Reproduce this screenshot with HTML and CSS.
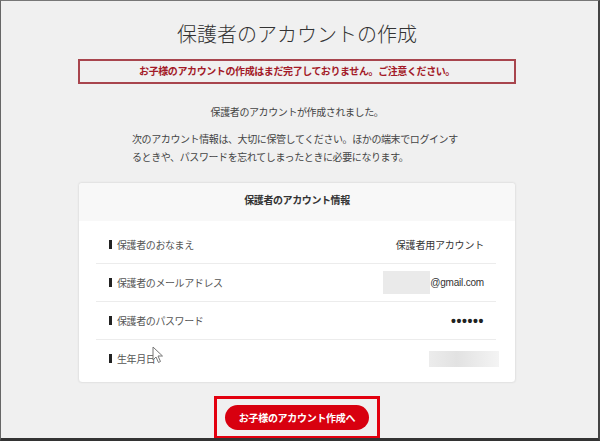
FILE: index.html
```html
<!DOCTYPE html>
<html lang="ja">
<head>
    <meta charset="UTF-8">
    <meta name="viewport" content="width=device-width, initial-scale=1.0">
    <title>保護者のアカウントの作成</title>
    <link rel="stylesheet" href="styles.css">
</head>
<body>
    <div class="frame">
        <div class="content">
            <h1 class="title">保護者のアカウントの作成</h1>
            <div class="warning">お子様のアカウントの作成はまだ完了しておりません。ご注意ください。</div>

            <p class="done">保護者のアカウントが作成されました。</p>
            <p class="note">次のアカウント情報は、大切に保管してください。ほかの端末でログインするときや、パスワードを忘れてしまったときに必要になります。</p>

            <div class="card">
                <div class="card-head">保護者のアカウント情報</div>
                <ul class="info">
                    <li class="row">
                        <span class="label">保護者のおなまえ</span>
                        <span class="value">保護者用アカウント</span>
                    </li>
                    <li class="row">
                        <span class="label">保護者のメールアドレス</span>
                        <span class="value"><span class="mask"></span>@gmail.com</span>
                    </li>
                    <li class="row">
                        <span class="label">保護者のパスワード</span>
                        <span class="value dots">••••••</span>
                    </li>
                    <li class="row">
                        <span class="label">生年月日</span>
                        <span class="value"><span class="mask mask-date"></span></span>
                    </li>
                </ul>
                <svg class="cursor" width="12" height="18" viewBox="0 0 12 18">
                    <path d="M1 1 L1 14 L4 11 L6.5 16.5 L8.5 15.5 L6 10 L10.5 10 Z" fill="#fff" stroke="#777" stroke-width="1" stroke-linejoin="round"/>
                </svg>
            </div>

            <div class="next-box">
                <button class="next-btn">お子様のアカウント作成へ</button>
            </div>
        </div>
    </div>
</body>
</html>
```

FILE: styles.css
```css
body {
    margin: 0;
    font-family: "Liberation Sans", "Noto Sans CJK JP", sans-serif;
    color: #333;
}
.frame {
    width: 600px;
    height: 441px;
    box-sizing: border-box;
    border-left: 1px solid #666;
    border-top: 1px solid #777;
    border-right: 2px solid #444;
    border-bottom: 3px solid #333;
    background-color: #f0f0f0;
    overflow: hidden;
}
.content {
    width: 438px;
    margin-left: 77px;
}
.title {
    margin: 22px 0 0;
    font-size: 20px;
    line-height: 24px;
    font-weight: 300;
    text-align: center;
    color: #333;
}
.warning {
    margin-top: 12px;
    height: 21px;
    line-height: 21px;
    border: 2px solid #a8454d;
    text-align: center;
    font-size: 10px;
    letter-spacing: -0.4px;
    font-weight: bold;
    color: #a31a28;
}
.done, .note {
    font-size: 10px;
    letter-spacing: -0.4px;
    line-height: 18px;
    margin: 0;
    color: #444;
}
.done {
    margin-top: 20px;
    text-align: center;
}
.note {
    margin: 9px auto 0;
    width: 330px;
}
.card {
    position: relative;
    margin-top: 15px;
    background: #fff;
    border: 1px solid #e4e4e4;
    border-radius: 4px;
    box-shadow: 0 0 2px rgba(0, 0, 0, 0.06);
}
.card-head {
    height: 38px;
    line-height: 36px;
    background-color: #f8f8f8;
    text-align: center;
    font-size: 10px;
    letter-spacing: -0.4px;
    font-weight: bold;
    color: #333;
    border-radius: 4px 4px 0 0;
}
.info {
    list-style: none;
    margin: 0 19px 0 17px;
    padding: 5px 0 5px;
}
.row {
    display: flex;
    justify-content: space-between;
    align-items: center;
    height: 37px;
    padding: 0 12px 0 13px;
    border-bottom: 1px solid #ececec;
    font-size: 10px;
}
.row:last-child {
    border-bottom: none;
}
.label {
    display: flex;
    align-items: center;
    gap: 5px;
    color: #555;
    letter-spacing: -0.4px;
}
.label::before {
    content: "";
    width: 3px;
    height: 9px;
    background: #222;
}
.value {
    display: flex;
    align-items: center;
    color: #333;
    font-size: 10px;
    letter-spacing: -0.2px;
}
.dots {
    font-size: 14px;
    letter-spacing: 0.6px;
    font-weight: bold;
    color: #222;
}
.mask {
    display: inline-block;
    width: 47px;
    height: 23px;
    background: #eaeaea;
}
.mask-date {
    width: 70px;
    height: 16px;
    margin-right: -15px;
    background: linear-gradient(to right, #ececec, #e2e2e2 40%, #f4f4f4);
}
.cursor {
    position: absolute;
    left: 73px;
    top: 163px;
}
.next-box {
    width: 144px;
    margin: 13px auto 0;
    padding: 6px 8px 6px;
    border: 3px solid #e3000f;
}
.next-btn {
    display: block;
    width: 144px;
    height: 25px;
    border: none;
    border-radius: 13px;
    background-color: #d8000f;
    color: #fff;
    font-family: inherit;
    font-size: 10px;
    letter-spacing: -0.3px;
    font-weight: bold;
    cursor: pointer;
}
```
